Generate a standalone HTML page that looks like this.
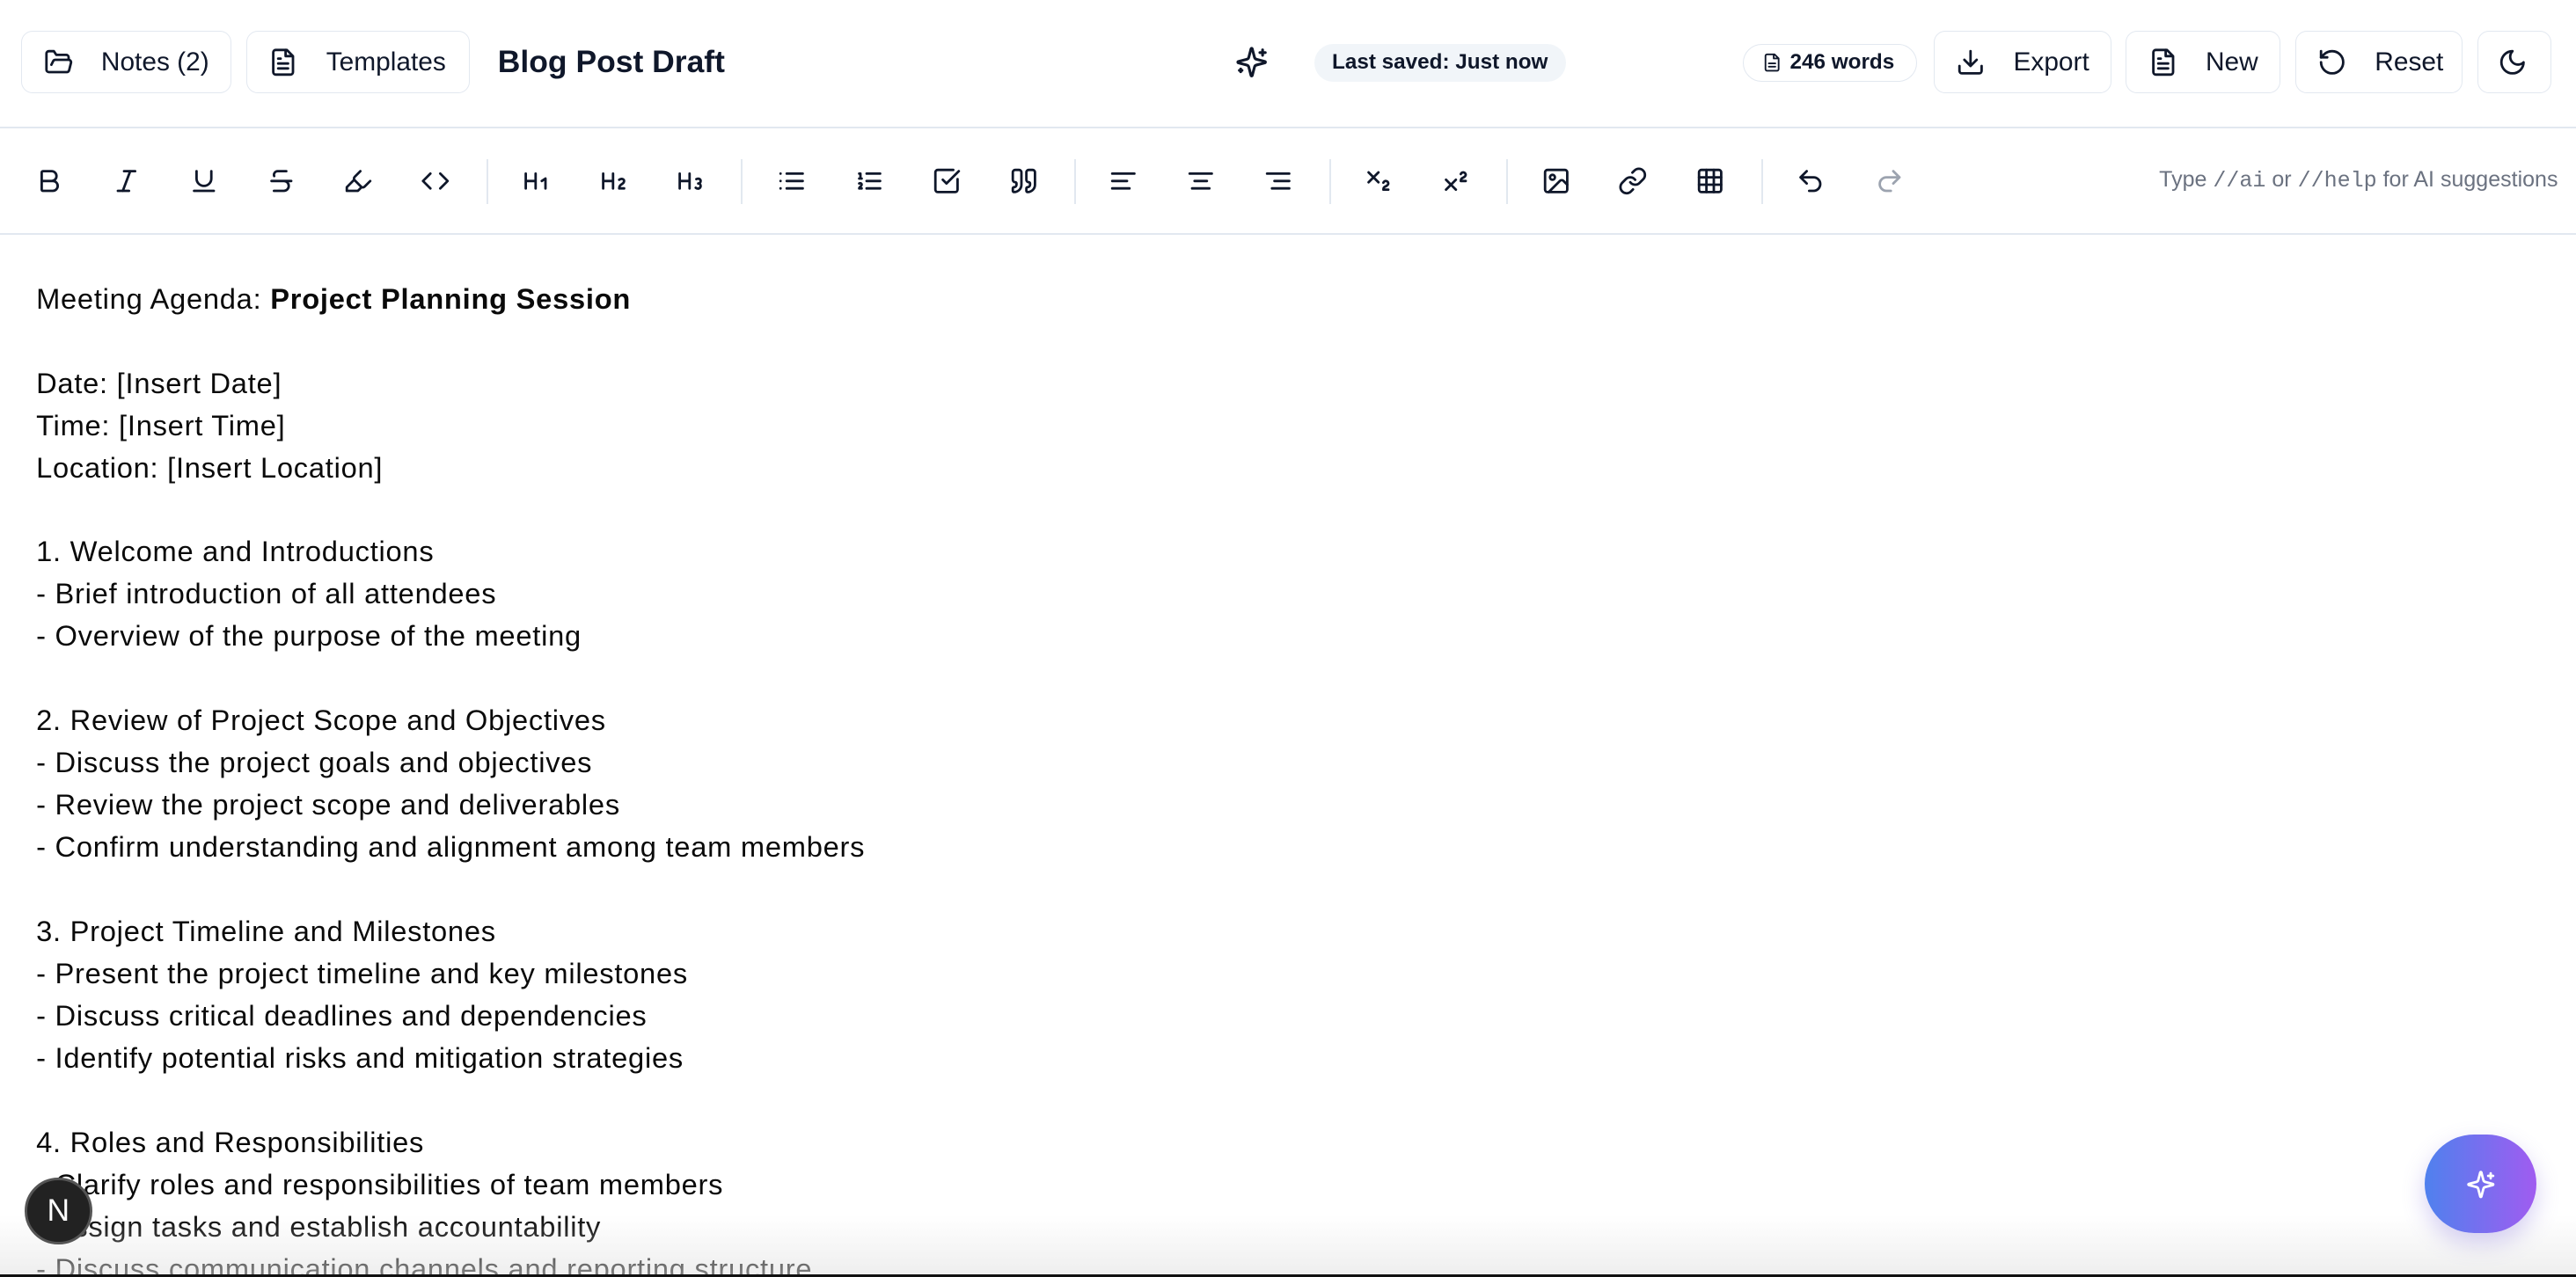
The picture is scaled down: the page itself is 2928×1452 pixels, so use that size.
<!DOCTYPE html>
<html><head><meta charset="utf-8"><style>
*{box-sizing:border-box;margin:0;padding:0}
html,body{width:2928px;height:1452px;overflow:hidden;background:#fff}
#r{zoom:1.86735;width:1568px;height:778px;position:relative;font-family:"Liberation Sans",sans-serif;color:#0a0a0a;overflow:hidden}
.a{position:absolute}
.btn{position:absolute;top:19px;height:38px;border:1px solid #e2e8f0;border-radius:7px;display:flex;align-items:center;font-size:16px;color:#0f172a;background:#fff}
.btn svg{margin-left:13px;margin-right:17px}
svg{fill:none;stroke:#0f172a;stroke-width:2;stroke-linecap:round;stroke-linejoin:round}
.ti{position:absolute;top:101px;width:18px;height:18px}
.sep{position:absolute;top:97px;width:1px;height:27px;background:#e2e8f0}
.c{position:absolute;left:22px;top:169px;font-size:17.5px;line-height:25.7px;white-space:pre;letter-spacing:0.4px}
</style></head><body><div id="r">
<div class="btn" style="left:13px;width:128px"><svg width="18" height="18" viewBox="0 0 24 24"><path d="M6 14l1.5-3a2 2 0 0 1 1.8-1H20a2 2 0 0 1 1.9 2.5l-1.5 6a2 2 0 0 1-2 1.5H4a2 2 0 0 1-2-2V5a2 2 0 0 1 2-2h4l2 3h8a2 2 0 0 1 2 2v2"/></svg>Notes (2)</div>
<div class="btn" style="left:150px;width:136px"><svg width="18" height="18" viewBox="0 0 24 24"><path d="M15 2H6a2 2 0 0 0-2 2v16a2 2 0 0 0 2 2h12a2 2 0 0 0 2-2V7z"/><path d="M14 2v5h5M16 13H8M16 17H8M10 9H8"/></svg>Templates</div>
<div class="a" style="left:303px;top:27px;font-size:19px;font-weight:bold;color:#0f172a">Blog Post Draft</div>
<svg class="a" style="left:752px;top:28px" width="20" height="20" viewBox="0 0 24 24"><path d="M9.9 15.5A2 2 0 0 0 8.5 14.1L2.4 12.5a.5.5 0 0 1 0-1l6.1-1.6A2 2 0 0 0 9.9 8.5l1.6-6.1a.5.5 0 0 1 1 0l1.6 6.1a2 2 0 0 0 1.4 1.4l6.1 1.6a.5.5 0 0 1 0 1l-6.1 1.6a2 2 0 0 0-1.4 1.4l-1.6 6.1a.5.5 0 0 1-1 0z"/><path d="M20 3v4M22 5h-4M4 17v2M5 18H3"/></svg>
<div class="a" style="left:800px;top:27px;width:153px;height:23px;border-radius:12px;background:#f1f5f9;font-size:13px;font-weight:bold;color:#0f172a;text-align:center;line-height:23px">Last saved: Just now</div>
<div class="a" style="left:1061px;top:27px;width:106px;height:23px;border-radius:12px;border:1px solid #e2e8f0;font-size:13px;font-weight:bold;color:#0f172a;line-height:21px;padding-left:28px"><svg class="a" style="left:11px;top:4px" width="12" height="13" viewBox="0 0 24 24"><path d="M15 2H6a2 2 0 0 0-2 2v16a2 2 0 0 0 2 2h12a2 2 0 0 0 2-2V7z"/><path d="M14 2v5h5M16 13H8M16 17H8"/></svg>246 words</div>
<div class="btn" style="left:1177px;width:108px"><svg width="18" height="18" viewBox="0 0 24 24"><path d="M21 15v4a2 2 0 0 1-2 2H5a2 2 0 0 1-2-2v-4M7 10l5 5 5-5M12 15V3"/></svg>Export</div>
<div class="btn" style="left:1294px;width:94px"><svg width="18" height="18" viewBox="0 0 24 24"><path d="M15 2H6a2 2 0 0 0-2 2v16a2 2 0 0 0 2 2h12a2 2 0 0 0 2-2V7z"/><path d="M14 2v5h5M16 13H8M16 17H8M10 9H8"/></svg>New</div>
<div class="btn" style="left:1397px;width:102px"><svg width="18" height="18" viewBox="0 0 24 24"><path d="M3 12a9 9 0 1 0 9-9 9.75 9.75 0 0 0-6.74 2.740L3 8"/><path d="M3 3v5h5"/></svg>Reset</div>
<div class="btn" style="left:1508px;width:45px"><svg width="18" height="18" viewBox="0 0 24 24" style="margin:0 0 0 12px"><path d="M12 3a6 6 0 0 0 9 9 9 9 0 1 1-9-9z"/></svg></div>
<div class="a" style="left:0;top:77px;width:1568px;height:1px;background:#e2e8f0"></div>
<div class="a" style="left:0;top:142px;width:1568px;height:1px;background:#e2e8f0"></div>
<svg class="ti" style="left:21px" viewBox="0 0 24 24"><path d="M6 12h9a4 4 0 0 1 0 8H7a1 1 0 0 1-1-1V5a1 1 0 0 1 1-1h7a4 4 0 0 1 0 8"/></svg>
<svg class="ti" style="left:68px" viewBox="0 0 24 24"><path d="M19 4h-9M14 20H5M15 4L9 20"/></svg>
<svg class="ti" style="left:115px" viewBox="0 0 24 24"><path d="M6 4v6a6 6 0 0 0 12 0V4M4 20h16"/></svg>
<svg class="ti" style="left:162px" viewBox="0 0 24 24"><path d="M16 4H9a3 3 0 0 0-2.83 4M14 12a4 4 0 0 1 0 8H6M4 12h16"/></svg>
<svg class="ti" style="left:209px" viewBox="0 0 24 24"><path d="M9 11l-6 6v3h9l3-3M22 12l-4.6 4.6a2 2 0 0 1-2.8 0l-5.2-5.2a2 2 0 0 1 0-2.8L14 4"/></svg>
<svg class="ti" style="left:256px" viewBox="0 0 24 24"><path d="M16 18l6-6-6-6M8 6l-6 6 6 6"/></svg>
<div class="sep" style="left:296px"></div>
<svg class="ti" style="left:317px" viewBox="0 0 24 24"><path d="M4 12h8M4 18V6M12 18V6M17 12l3-2v8"/></svg>
<svg class="ti" style="left:364px" viewBox="0 0 24 24"><path d="M4 12h8M4 18V6M12 18V6M21 18h-4c0-4 4-3 4-6 0-1.5-2-2.5-4-1"/></svg>
<svg class="ti" style="left:411px" viewBox="0 0 24 24"><path d="M4 12h8M4 18V6M12 18V6M17.5 10.5c1.7-1 3.5 0 3.5 1.5a2 2 0 0 1-2 2M17 17.5c2 1.5 4 .3 4-1.5a2 2 0 0 0-2-2"/></svg>
<div class="sep" style="left:451px"></div>
<svg class="ti" style="left:473px" viewBox="0 0 24 24"><path d="M8 6h13M8 12h13M8 18h13M3 6h.01M3 12h.01M3 18h.01"/></svg>
<svg class="ti" style="left:520px" viewBox="0 0 24 24"><path d="M10 6h11M10 12h11M10 18h11M4 6h1v4M4 10h2M6 18H4c0-1 2-2 2-3s-1-1.5-2-1"/></svg>
<svg class="ti" style="left:567px" viewBox="0 0 24 24"><path d="M21 10.5V19a2 2 0 0 1-2 2H5a2 2 0 0 1-2-2V5a2 2 0 0 1 2-2h12.5M9 11l3 3L22 4"/></svg>
<svg class="ti" style="left:614px" viewBox="0 0 24 24"><path d="M16 3a2 2 0 0 0-2 2v6a2 2 0 0 0 2 2 1 1 0 0 1 1 1v1a2 2 0 0 1-2 2 1 1 0 0 0-1 1v2a1 1 0 0 0 1 1 6 6 0 0 0 6-6V5a2 2 0 0 0-2-2zM5 3a2 2 0 0 0-2 2v6a2 2 0 0 0 2 2 1 1 0 0 1 1 1v1a2 2 0 0 1-2 2 1 1 0 0 0-1 1v2a1 1 0 0 0 1 1 6 6 0 0 0 6-6V5a2 2 0 0 0-2-2z"/></svg>
<div class="sep" style="left:654px"></div>
<svg class="ti" style="left:675px" viewBox="0 0 24 24"><path d="M15 12H3M17 18H3M21 6H3"/></svg>
<svg class="ti" style="left:722px" viewBox="0 0 24 24"><path d="M17 12H7M19 18H5M21 6H3"/></svg>
<svg class="ti" style="left:769px" viewBox="0 0 24 24"><path d="M21 12H9M21 18H7M21 6H3"/></svg>
<div class="sep" style="left:809px"></div>
<svg class="ti" style="left:830px" viewBox="0 0 24 24"><path d="M4 5l8 8M12 5l-8 8M20 19h-4c0-1.5.44-2 1.5-2.5S20 15.33 20 14c0-.47-.17-.93-.48-1.29a2.11 2.11 0 0 0-2.62-.44c-.42.24-.74.62-.9 1.07"/></svg>
<svg class="ti" style="left:877px" viewBox="0 0 24 24"><path d="M4 19l8-8M12 19l-8-8M20 12h-4c0-1.5.44-2 1.5-2.5S20 8.33 20 7c0-.47-.17-.93-.48-1.29a2.11 2.11 0 0 0-2.62-.44c-.42.24-.74.62-.9 1.07"/></svg>
<div class="sep" style="left:917px"></div>
<svg class="ti" style="left:938px" viewBox="0 0 24 24"><rect x="3" y="3" width="18" height="18" rx="2"/><circle cx="9" cy="9" r="2"/><path d="M21 15l-3.1-3.1a2 2 0 0 0-2.8 0L6 21"/></svg>
<svg class="ti" style="left:985px" viewBox="0 0 24 24"><path d="M10 13a5 5 0 0 0 7.54.54l3-3a5 5 0 0 0-7.07-7.07l-1.72 1.71M14 11a5 5 0 0 0-7.54-.54l-3 3a5 5 0 0 0 7.07 7.07l1.71-1.71"/></svg>
<svg class="ti" style="left:1032px" viewBox="0 0 24 24"><rect x="3" y="3" width="18" height="18" rx="2"/><path d="M3 9h18M3 15h18M9 3v18M15 3v18"/></svg>
<div class="sep" style="left:1072px"></div>
<svg class="ti" style="left:1093px" viewBox="0 0 24 24"><path d="M9 14L4 9l5-5M4 9h10.5a5.5 5.5 0 0 1 5.5 5.5 5.5 5.5 0 0 1-5.5 5.5H11"/></svg>
<svg class="ti" style="left:1141px;stroke:#9ca3af" viewBox="0 0 24 24"><path d="M15 14l5-5-5-5M20 9H9.5A5.5 5.5 0 0 0 4 14.5 5.5 5.5 0 0 0 9.5 20H13"/></svg>
<div class="a" style="right:11px;top:102px;font-size:13.4px;color:#6b7280">Type <span style="font-family:'Liberation Mono',monospace">//ai</span> or <span style="font-family:'Liberation Mono',monospace">//help</span> for AI suggestions</div>
<div class="c">Meeting Agenda: <b>Project Planning Session</b>

Date: [Insert Date]
Time: [Insert Time]
Location: [Insert Location]

1. Welcome and Introductions
- Brief introduction of all attendees
- Overview of the purpose of the meeting

2. Review of Project Scope and Objectives
- Discuss the project goals and objectives
- Review the project scope and deliverables
- Confirm understanding and alignment among team members

3. Project Timeline and Milestones
- Present the project timeline and key milestones
- Discuss critical deadlines and dependencies
- Identify potential risks and mitigation strategies

4. Roles and Responsibilities
- Clarify roles and responsibilities of team members
- Assign tasks and establish accountability
- Discuss communication channels and reporting structure</div>
<div class="a" style="left:0;top:740px;width:1568px;height:36px;background:linear-gradient(rgba(255,255,255,0),rgba(225,225,225,.55))"></div>
<div class="a" style="left:0;top:776px;width:1568px;height:2px;background:#111"></div>
<div class="a" style="left:15px;top:717px;width:41px;height:41px;border-radius:50%;background:#222;border:2px solid #555;color:#fff;font-size:19px;text-align:center;line-height:37px">N</div>
<div class="a" style="left:1476px;top:691px;width:68px;height:60px;border-radius:30px;background:linear-gradient(90deg,#4f81ee,#a05cf0);box-shadow:0 6px 14px rgba(120,100,220,.3)"><svg class="a" style="left:25px;top:21px;stroke:#fff" width="18" height="18" viewBox="0 0 24 24"><path d="M9.9 15.5A2 2 0 0 0 8.5 14.1L2.4 12.5a.5.5 0 0 1 0-1l6.1-1.6A2 2 0 0 0 9.9 8.5l1.6-6.1a.5.5 0 0 1 1 0l1.6 6.1a2 2 0 0 0 1.4 1.4l6.1 1.6a.5.5 0 0 1 0 1l-6.1 1.6a2 2 0 0 0-1.4 1.4l-1.6 6.1a.5.5 0 0 1-1 0z"/><path d="M20 3v4M22 5h-4"/></svg></div>
</div></body></html>
